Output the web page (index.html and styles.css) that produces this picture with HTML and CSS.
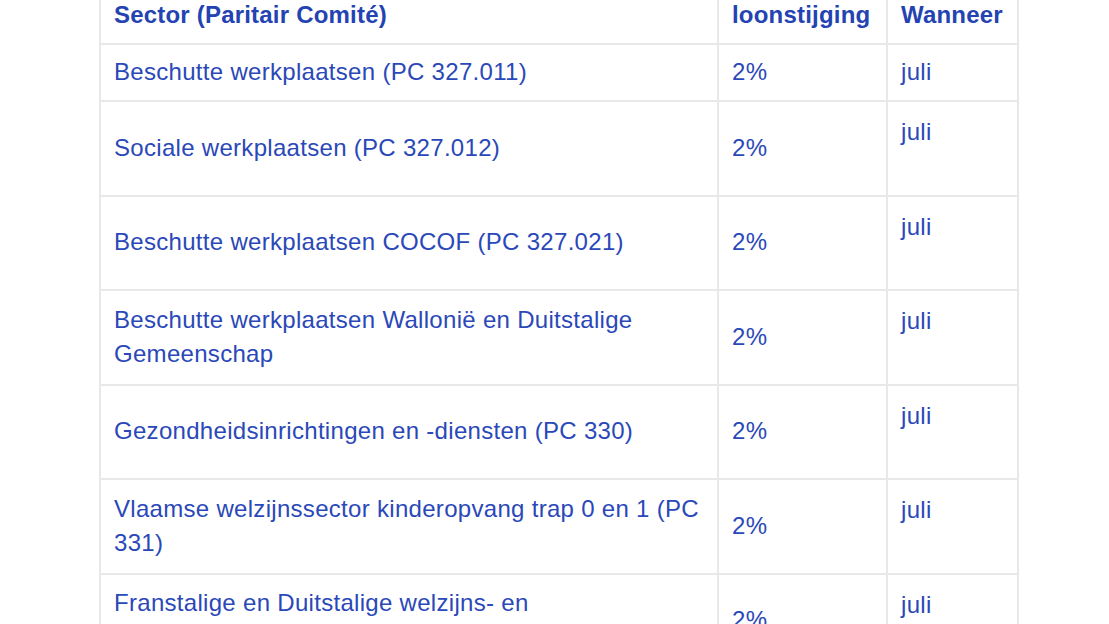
FILE: index.html
```
<!DOCTYPE html>
<html lang="nl">
<head>
<meta charset="utf-8">
<title>Loonstijging</title>
<link rel="stylesheet" href="styles.css">
</head>
<body>
<div class="page">
<table class="wage">
<colgroup><col class="c1"><col class="c2"><col class="c3"></colgroup>
<thead>
<tr class="r-single"><th>Sector (Paritair Comité)</th><th>loonstijging</th><th>Wanneer</th></tr>
</thead>
<tbody>
<tr class="r-single"><td>Beschutte werkplaatsen (PC 327.011)</td><td>2%</td><td>juli</td></tr>
<tr class="r-double"><td>Sociale werkplaatsen (PC 327.012)</td><td>2%</td><td class="top">juli</td></tr>
<tr class="r-double"><td>Beschutte werkplaatsen COCOF (PC 327.021)</td><td>2%</td><td class="top">juli</td></tr>
<tr class="r-double"><td>Beschutte werkplaatsen Wallonië en Duitstalige Gemeenschap</td><td>2%</td><td class="top">juli</td></tr>
<tr class="r-double"><td>Gezondheidsinrichtingen en -diensten (PC 330)</td><td>2%</td><td class="top">juli</td></tr>
<tr class="r-double"><td>Vlaamse welzijnssector kinderopvang trap 0 en 1 (PC 331)</td><td>2%</td><td class="top">juli</td></tr>
<tr class="r-double"><td>Franstalige en Duitstalige welzijns- en gezondheidssector (PC 332)</td><td>2%</td><td class="top">juli</td></tr>
</tbody>
</table>
</div>
</body>
</html>
```
FILE: styles.css
```
html, body {
  margin: 0;
  padding: 0;
  background: #ffffff;
  overflow: hidden;
}
.page {
  padding-left: 99px;
  margin-top: -14px;
}
.wage {
  border-collapse: collapse;
  font-family: "Liberation Sans", Arial, Helvetica, sans-serif;
  font-size: 24px;
  line-height: 34px;
  letter-spacing: 0.3px;
  color: #2a48b8;
  table-layout: fixed;
  width: 918px;
}
.c1 { width: 618px; }
.c2 { width: 169px; }
.c3 { width: 131px; }
.wage th, .wage td {
  border: 2px solid #e8e8e8;
  padding: 10px 12px 11px 13px;
  text-align: left;
  vertical-align: middle;
}
.wage th {
  font-weight: bold;
  letter-spacing: 0.2px;
  color: #2443b2;
}
.r-single { height: 57px; }
.r-double { height: 94.5px; }
.wage td.top { vertical-align: top; padding-top: 13px; }
```
